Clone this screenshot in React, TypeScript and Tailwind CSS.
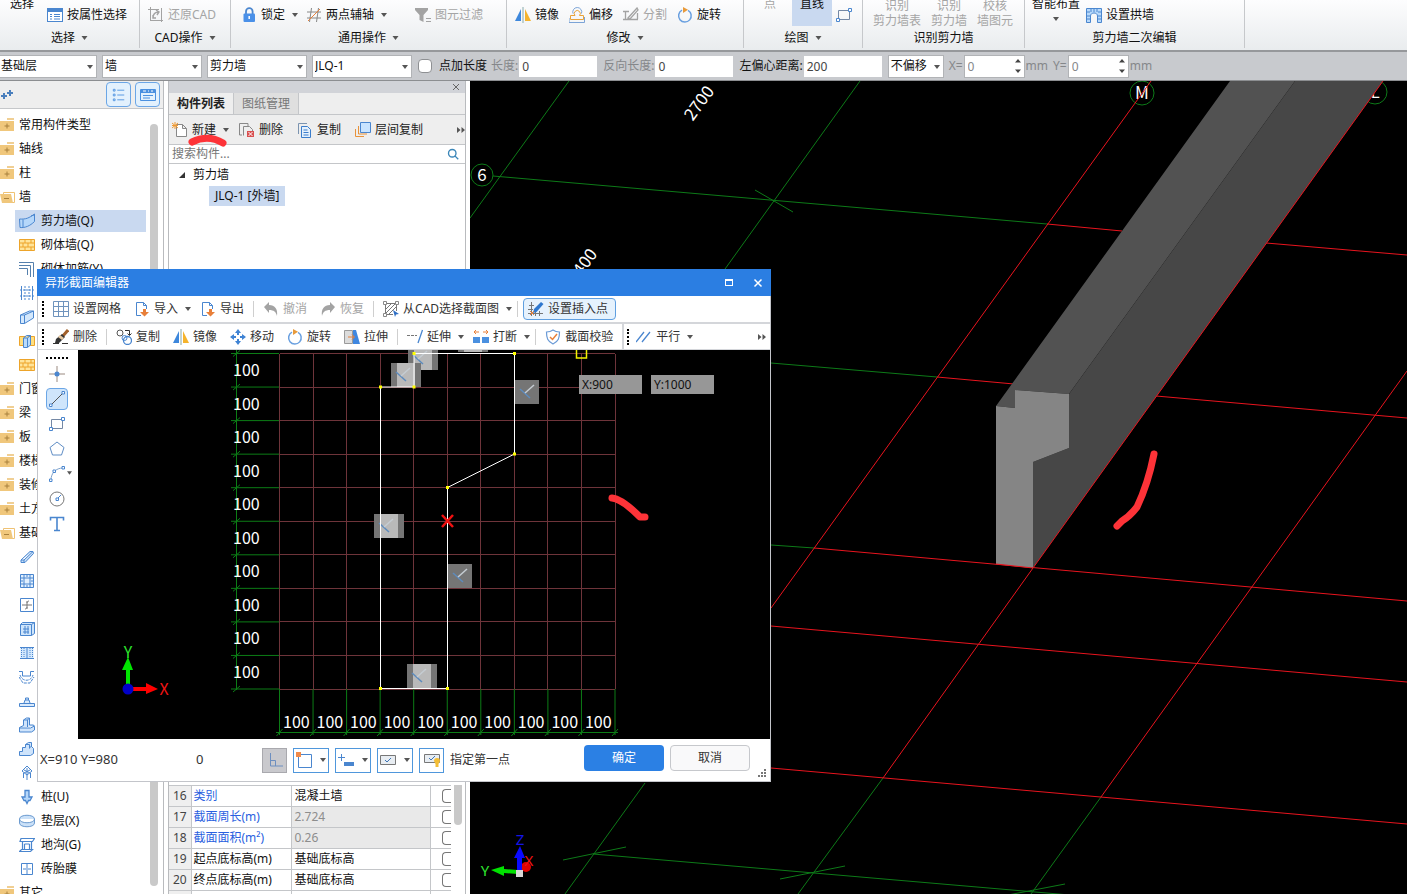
import type { ReactNode } from "react";

const BLUE = "#4a86cf";
const ORANGE = "#e8803a";
const GREY = "#a3a3a3";

const icons: Record<string, ReactNode> = {
  props: (
    <g>
      <rect x="0.5" y="1.5" width="15" height="13" fill="#fff" stroke={BLUE} />
      <path d="M1 2h14v3H1z" fill={BLUE} />
      <path d="M3 7.500h2M3 9.500h2M3 12h2M7 7.500h6M7 9.500h6M7 12h6" stroke={BLUE} />
    </g>
  ),
  restore: (
    <g stroke={GREY}>
      <path d="M2.500 0v14M0 2.500h11M2 13.500h13M13.500 1v14" />
      <path d="M5 11c0-4 2-6 6-6M8 3l3 2-2 3M5 8v3h3" strokeWidth="1.400" />
    </g>
  ),
  lock: (
    <g>
      <path d="M5 8V4.500a3.300 3.300 0 0 1 6.600 0V8" stroke={BLUE} strokeWidth="1.800" />
      <rect x="2.500" y="6.500" width="11.500" height="8.500" rx="1" fill="#4a90e8" />
      <path d="M8.200 9v3" stroke="#fff" strokeWidth="1.500" />
    </g>
  ),
  axis: (
    <g>
      <path d="M5.500 1L3.500 15M12.500 1l-2 14M1 5h14M1 11h14" stroke="#888" />
      <path d="M2 14L14 2" stroke={ORANGE} />
    </g>
  ),
  filter: (
    <g>
      <path d="M0 1h13v2L8.500 8v7l-4-2V8L0 3z" fill={GREY} />
      <path d="M11 11.500h5M11 14.500h5" stroke={GREY} />
    </g>
  ),
  mirror: (
    <g>
      <path d="M6 2v12H0z" fill="#3d87dc" />
      <path d="M10 2v12h6z" fill="#f5b32c" />
      <path d="M8 0v16" stroke="#8aa" />
    </g>
  ),
  offset: (
    <g>
      <path d="M6 8.500a3 3 0 1 1 4.500 0h4v4h-13v-4z" stroke="#e8a33a" />
      <path d="M4 6.500a4.500 4.500 0 1 1 8.500 0M0 11v4.500h15.500V10" stroke="#7ba3d6" />
    </g>
  ),
  split: (
    <g stroke={GREY} strokeWidth="1.300">
      <path d="M0 4.500h6M2.500 4.500v8H15M14.500 12V6M5 11L14 1l1 2-8 9zM0 12.500h2" />
    </g>
  ),
  rotate: (
    <g>
      <path d="M11 3.300A6.300 6.300 0 1 1 5 3.200" stroke="#6aa0e0" strokeWidth="1.500" />
      <path d="M6 0l5 2.800L6 6z" fill="#e89a3a" />
    </g>
  ),
  rect: (
    <g>
      <path d="M2.500 3.500h11v9h-11z" stroke="#7488a5" />
      <path d="M12.500 1.500h3v3h-3zM.5 11.500h3v3h-3z" fill="#fff" stroke={BLUE} />
    </g>
  ),
  arch: (
    <g>
      <path d="M.5 15.500V1.500h15v14h-4V9c0-4-7-4-7 0v6.500z" fill="#b7d9fb" stroke={BLUE} />
      <path d="M1 5h3M1 9h3M1 12h3M12 5h3M12 9h3M12 12h3M5 1v4M8 1v4M11 1v4" stroke={BLUE} />
    </g>
  ),
  list: (
    <g stroke="#4a90e0">
      <path d="M1.500 1.500h2v2h-2zM1.500 7h2v2h-2zM1.500 12.500h2v2h-2zM6 2.500h8M6 8h8M6 13.500h8" />
    </g>
  ),
  card: (
    <g>
      <path d="M.5 2.500h15v11H.5z" stroke="#4a90e0" />
      <path d="M1 2h14v4H1z" fill="#4a90e0" />
      <path d="M3 4h3M8 4h1M11 4h2" stroke="#fff" />
      <path d="M3 8.500h10M3 11h7" stroke="#4a90e0" />
    </g>
  ),
  folder: (
    <g>
      <path d="M7 1h7v2H7z" fill="#f0cf94" />
      <path d="M0 4h14v10H0z" fill="#f0c77c" />
      <path d="M7 6.500v5M4.500 9h5" stroke="#a8803c" />
    </g>
  ),
  folderOpen: (
    <g>
      <path d="M3.500 3.500h11v10h-11z" fill="#fff" stroke="#efc274" />
      <path d="M0 5h11l2 9H2z" fill="#f0c77c" />
      <path d="M4 9.500h5" stroke="#a8803c" />
    </g>
  ),
  wall: (
    <path
      d="M.5 6C7 6.500 10 5 15.500 1v7.500C11 13 6 15 1 14.500zM4 6.500v8M12 3l3-1"
      fill="#b5d7fa"
      stroke={BLUE}
    />
  ),
  brick: (
    <g stroke="#eda42a">
      <path d="M.5 2.500h15v11H.5z" fill="#ffe49a" />
      <path d="M1 6h14M1 10h14M6 2.500V6M12 2.500V6M4 6v4M9 6v4M6 10v4M12 10v4" />
    </g>
  ),
  rebar: <path d="M0 1.500h14.500V16M0 4.500h11.500V16M0 7.500h8.500V14" stroke="#5580ad" />,
  bars: (
    <g stroke={BLUE}>
      <path d="M2.500 1v14M13.500 1v14" />
      <path d="M6 1v14M10 1v14M1 5h14M1 11h14" strokeDasharray="2 1" />
    </g>
  ),
  block: <path d="M1.500 6l9-4h4v7l-9 5.500h-4zM1.500 6h4v8.500M5.500 6l9-4" fill="#d4e8fc" stroke={BLUE} />,
  window: (
    <g>
      <path d="M.5 3.500h15v9H.5z" fill="#ffdf80" stroke="#eda42a" />
      <path d="M4.500 5l3-2.500h4V12l-3 2.500h-4zM8.500 5v9M4.500 5h4l3-2.500" fill="#b9dbfb" stroke={BLUE} />
    </g>
  ),
  beam: <path d="M2 11l9-8.500h3l.500 2L6 13.500H2zM2 11h3l9-8.500M5 11v2.500" fill="#c9e1fa" stroke={BLUE} />,
  raft: (
    <path
      d="M1.500 1.500h13v13h-13zM5 5h6v6H5zM5 1v4M11 1v4M5 11v4M11 11v4M1 5h4M1 11h4M11 5h4M11 11h4M8 1v3M8 12v3M1 8h3M12 8h3"
      fill="#e2f0fe"
      stroke={BLUE}
    />
  ),
  pit: (
    <g>
      <path d="M1.500 1.500h13v13h-13z" stroke={BLUE} />
      <path d="M8 4v8M3 8h10M10 4c-1 0-2 1-2 2M6 12c1 0 2-1 2-2" stroke="#777" />
    </g>
  ),
  plate: (
    <path
      d="M1.500 3.500h11v11h-11zM1.500 3.500l2-2h12v11l-3 2M12.500 3.500l3-2M4 8h6M4 11h6M6 5v8M9 5v8"
      fill="#cfe5fb"
      stroke={BLUE}
    />
  ),
  strip: (
    <g stroke={BLUE}>
      <path d="M1.500 2.500h13v11h-13z" fill="#d3e8fd" stroke="none" />
      <path d="M1 2.500h14M1 13.500h14M8 2.500v11" />
      <path d="M2.500 3v10M5 3v10M11 3v10M13.500 3v10" strokeDasharray="1 1" />
    </g>
  ),
  basin: (
    <g stroke={BLUE}>
      <path d="M0 2.500h3.500V7h8V2.500H15" />
      <path d="M1 6c2 7 11 7 13 0M0 8l4 6h7l4-6" strokeDasharray="3 1" />
    </g>
  ),
  footing: <path d="M.5 10.500h15v3H.5zM5 10l1-3h4l1 3M6.500 7V5h3v2" fill="#d9eafc" stroke={BLUE} />,
  pedestal: (
    <path
      d="M.5 10.500l4-2V3l3-2h3v7h4l1 2v3l-3 2h-12zM4.500 3h4v7M8.500 3l2-2M.5 11h11l4-2"
      fill="#cfe4fb"
      stroke={BLUE}
    />
  ),
  step: (
    <path
      d="M.5 14.500v-4h3v-4h3v-3l3-2h3v4l2 2v5l-3 2zM6.500 3.500h4v4M10 7l3-2"
      fill="#cfe4fb"
      stroke={BLUE}
    />
  ),
  cap: <path d="M3 6l5-5 5 5-5 4zM4.500 8v5M8 3v12M11.500 8v5M5 5l6 3M11 5L5 8" stroke={BLUE} />,
  pile: (
    <path
      d="M6 1.500h4V8h3l-2 3.500H9.500L8 14.500l-1.500-3H5L3 8h3z"
      fill="#b5d7fa"
      stroke={BLUE}
      strokeWidth="1.300"
    />
  ),
  cushion: (
    <path d="M.5 6c0-5 15-5 15 0v4c0 5-15 5-15 0zM.5 6c0 5 15 5 15 0" fill="#cbe1f8" stroke="#6c9bd0" />
  ),
  trench: (
    <path
      d="M2 1.500h13.500l-2 3H1zM3.500 5v8M5.500 7v6M10.500 7v6M12.500 5v8M5.500 7h5M.5 14.500l2-2h11l-2 2z"
      stroke={BLUE}
      strokeWidth="1.200"
    />
  ),
  mold: <path d="M2.500 2.500h11v11h-11zM8 2.500v11M4 8h3M9 8h3" stroke={BLUE} />,
  newDoc: (
    <g>
      <path d="M4.500 2.500h6l4 4v8h-10zM10.500 2.500v4h4" fill="#fff" stroke="#888" />
      <path d="M0 1l6 5M6 1L0 6M3 0v7M0 3.500h6" stroke="#f09a32" />
    </g>
  ),
  delDoc: (
    <g>
      <path d="M3 13H.5V1.500H9V4M4.500 13.500v-9h6l3 3V9" stroke="#888" />
      <path d="M8 9h7v6H8z" fill="#d95050" />
      <path d="M9.500 10l4 4M13.500 10l-4 4" stroke="#fff" />
    </g>
  ),
  copyDoc: (
    <g stroke="#3b7dcb">
      <path d="M1.500 12V1.500H10" stroke="#7c94b0" />
      <path d="M4.500 4.500h6l3 3v8h-9z" fill="#e5f1fd" />
      <path d="M6.500 8h4M6.500 10.500h5M6.500 13h5" />
    </g>
  ),
  layers: (
    <g>
      <path d="M.5 7v7.500H9M3.500 4v8H12" stroke="#e8923a" />
      <path d="M5.500 .500h10v10h-10z" fill="#c9e4ff" stroke={BLUE} />
    </g>
  ),
  search: (
    <path
      d="M10.500 10.500l4.500 4.500M12 7a5 5 0 1 1-10 0 5 5 0 0 1 10 0z"
      stroke="#3b86b8"
      strokeWidth="1.800"
    />
  ),
  grid: <path d="M.5.5h15v15H.5zM5.500 0v16M10.500 0v16M0 5.500h16M0 10.500h16" stroke="#6f93bd" />,
  importDoc: (
    <g>
      <path d="M7 14.500H2.500v-13h7l3 3V8M9.500 1.500v3h3" stroke={BLUE} />
      <path d="M9 8h3v3h3l-4.500 4.500L6 11h3z" fill={ORANGE} />
    </g>
  ),
  undo: <path d="M1 6l5-5v3c6 0 9 4 8 11-1-4-3-6-8-6v3z" fill={GREY} />,
  redo: <path d="M15 6l-5-5v3C4 4 1 8 2 15c1-4 3-6 8-6v3z" fill={GREY} />,
  pick: (
    <g>
      <path d="M2 2.500h12M2.500 2v12M13.500 2v8M2 13.500h8M3 8l5-5M3 12l9-9M6 13l7-7" stroke="#777" />
      <path d="M.5.500h3v3h-3zM12.500.500h3v3h-3zM.5 12.500h3v3h-3z" fill="#fff" stroke="#888" />
      <path d="M10 9l6 4-3 .500-1 2.500z" fill="#2f6fc4" />
    </g>
  ),
  insert: (
    <g>
      <path d="M3.500 1v14M1 4.500h5M0 12.500h15M7.500 8v7M11.500 10v5M0 8.500h5" stroke="#777" />
      <path d="M6 8l7-7 2.500 2-7 8-3.500 1z" fill="#2f78cf" />
      <path d="M2 10l4 4M6 10l-4 4" stroke={ORANGE} />
    </g>
  ),
  brush: (
    <g>
      <path d="M15 1L9 8" stroke="#a2602a" strokeWidth="3" />
      <path d="M9 5l3 3-6 6H2l1-4z" fill="#333" />
      <path d="M7 6l4 3-2 2-4-3z" fill="#e6c8a0" />
      <path d="M0 14.500h6M9 14.500h6" stroke="#333" />
    </g>
  ),
  duplicate: (
    <g>
      <circle cx="4" cy="4" r="3" stroke="#555" />
      <circle cx="11.500" cy="11.500" r="4" stroke={BLUE} strokeWidth="1.300" />
      <circle cx="8.500" cy="9" r="2.500" stroke={BLUE} />
      <path d="M9 1.500h4.500V6M11.500 4.500l2 2 2-2" stroke="#333" />
    </g>
  ),
  move: (
    <g>
      <path d="M8 0l3 4H5zM8 16l3-4H5zM0 8l4-3v6zM16 8l-4-3v6z" fill="#3f83d4" />
      <path d="M8 3v3M8 10v3M3 8h3M10 8h3" stroke="#3f83d4" strokeWidth="2" />
    </g>
  ),
  stretch: (
    <g>
      <path d="M.5 1.500h8v13h-8z" fill="#dcdcdc" stroke="#9a9a9a" />
      <path d="M9 1h3l4 14H9z" fill="#3f87e0" />
      <path d="M4 8h6M8 5.500L10.500 8 8 10.500" stroke={ORANGE} />
    </g>
  ),
  extend: (
    <g>
      <path d="M0 6.500h10" stroke="#777" strokeDasharray="3 1" />
      <path d="M15.500 1L11 14" stroke={BLUE} strokeWidth="1.300" />
    </g>
  ),
  breakLine: (
    <g>
      <path d="M0 8h7v6H0zM9 8h7v6H9z" fill="#4a90e0" />
      <path d="M1 3h5M3 1L1 3l2 2M10 3h5M13 1l2 2-2 2" stroke={ORANGE} />
    </g>
  ),
  shield: (
    <g>
      <path
        d="M8 1c2 1.500 4 2 6.500 2 0 6-1 9.500-6.500 12C2.500 12.500 1.500 9 1.500 3 4 3 6 2.500 8 1z"
        stroke="#6a9ad6"
        strokeWidth="1.200"
      />
      <path d="M5 8l2.500 2.500L12 5" stroke={ORANGE} strokeWidth="1.500" />
    </g>
  ),
  parallel: <path d="M0 13l8-10M6 13l8-10" stroke={BLUE} strokeWidth="1.300" />,
  point: (
    <g>
      <path d="M8 0v16M0 8h16" stroke="#9a8a80" />
      <circle cx="8" cy="8" r="2.500" fill={BLUE} />
    </g>
  ),
  line: (
    <g stroke={BLUE}>
      <path d="M2 14L14 2" stroke="#555" />
      <path d="M.5 13h2.500v2.500H.5zM13 .500h2.500V3H13z" fill="#fff" />
    </g>
  ),
  polygon: <path d="M8 1l7 5.500L12.500 14h-9L1 6.500z" stroke="#5f8dc5" />,
  arc: (
    <g stroke={BLUE}>
      <path d="M2 14C2 7 7 2 14 2" stroke="#7fa3cc" />
      <path d="M.5 13h2.500v2.500H.5zM4 4h2.500v2.500H4zM13 .500h2.500V3H13z" fill="#fff" />
    </g>
  ),
  circle: (
    <g>
      <circle cx="8" cy="8" r="7" stroke="#777" />
      <path d="M7 7h2.500v2.500H7zM9 7l3-3" stroke={BLUE} />
    </g>
  ),
  letter: <path d="M1.500 4.500V1.500h13v3M8 1.500V14M5 14.500h6" stroke={BLUE} strokeWidth="1.600" />,
  ortho: <path d="M3.500 1v13H16M3.500 8.500h5V14" stroke="#6d8fc0" />,
  snapBox: (
    <g>
      <path d="M2.500 2.500h13v13h-13z" stroke={BLUE} />
      <path d="M0 0h5v5H0z" fill="#f08a4a" />
    </g>
  ),
  snapAdd: (
    <g>
      <path d="M0 5.500h7M3.500 2v7" stroke={BLUE} />
      <path d="M6 10h10v4H6z" fill={BLUE} />
    </g>
  ),
  tickBox: (
    <g>
      <path d="M.5 3.500h15v9H.5z" fill="#e8edf2" stroke="#777" />
      <path d="M5 8l2 2 4-4" stroke="#3f75b5" />
    </g>
  ),
  tickBulb: (
    <g>
      <path d="M.5 2.500h15v8H.5z" fill="#e8edf2" stroke="#777" />
      <path d="M5 6l2 2 4-4" stroke="#3f75b5" />
      <path d="M10 9a3 3 0 1 1 6 0l-1.500 3v3h-3v-3z" fill="#f3bd35" />
    </g>
  ),
};

function Icon({ name, className = "size-4" }: { name: string; className?: string }) {
  return (
    <svg viewBox="0 0 16 16" className={`shrink-0 ${className}`} fill="none" aria-hidden="true">
      {icons[name]}
    </svg>
  );
}

function Caret({ className = "h-1 w-1.5" }: { className?: string }) {
  return (
    <svg viewBox="0 0 6 4" className={`shrink-0 ${className}`} aria-hidden="true">
      <path d="M0 0h6L3 4z" fill="#555" />
    </svg>
  );
}

function More() {
  return (
    <button aria-label="更多" className="ml-auto shrink-0">
      <svg viewBox="0 0 8 6" className="h-1.5 w-2" aria-hidden="true">
        <path d="M0 0l3.500 3L0 6zM4.500 0L8 3 4.500 6z" fill="#555" />
      </svg>
    </button>
  );
}

type ToolProps = { icon: string; label: string; caret?: boolean; disabled?: boolean; className?: string };

function Tool({ icon, label, caret, disabled, className = "" }: ToolProps) {
  return (
    <button
      disabled={disabled}
      className={`flex shrink-0 items-center whitespace-nowrap disabled:text-[#a5a5a5] ${className}`}
    >
      <Icon name={icon} />
      <span className="ml-1">{label}</span>
      {caret && (
        <span className="-mr-1 ml-[7px] flex">
          <Caret />
        </span>
      )}
    </button>
  );
}

function Divider() {
  return <span className="-mx-1 h-4 w-px shrink-0 bg-[#cfcfcf]" />;
}

function Grip() {
  return <span className="h-4 w-0 shrink-0 border-l-2 border-dotted border-black" />;
}

type GroupProps = { title: string; caret?: boolean; className: string; children: ReactNode };

function RibbonGroup({ title, caret, className, children }: GroupProps) {
  return (
    <section className={`flex h-12 shrink-0 flex-col justify-end border-r border-[#c6c8cb] ${className}`}>
      <div className="flex shrink-0 items-end">{children}</div>
      <div className="flex h-5 shrink-0 items-center justify-center gap-1.5">
        {title}
        {caret && <Caret className="h-1 w-[7px]" />}
      </div>
    </section>
  );
}

function TallButton({ lines }: { lines: string[] }) {
  return (
    <button disabled className="shrink-0 text-center leading-[15px] text-[#a5a5a5]">
      {lines.map((line) => (
        <span key={line} className="block">
          {line}
        </span>
      ))}
    </button>
  );
}

function Ribbon() {
  return (
    <header className="flex h-[52px] shrink-0 items-start overflow-hidden border-b-2 border-[#96989b] bg-linear-to-b from-[#fdfdfe] to-[#e9ecee]">
      <RibbonGroup title="选择" caret className="w-[140px] px-2.5">
        <button className="mr-[13px] h-8 shrink-0 leading-4">
          <span className="block">选择</span>
          <span className="block h-4" />
        </button>
        <Tool icon="props" label="按属性选择" className="h-[26px]" />
      </RibbonGroup>
      <RibbonGroup title="CAD操作" caret className="w-[91px] px-2">
        <Tool icon="restore" label="还原CAD" disabled className="h-[26px]" />
      </RibbonGroup>
      <RibbonGroup title="通用操作" caret className="w-[276px] px-2.5">
        <Tool icon="lock" label="锁定" caret className="mr-3 h-[26px]" />
        <Tool icon="axis" label="两点辅轴" caret className="mr-8 h-[26px]" />
        <Tool icon="filter" label="图元过滤" disabled className="h-[26px]" />
      </RibbonGroup>
      <RibbonGroup title="修改" caret className="w-[237px] px-2">
        <div className="flex gap-2.5">
          <Tool icon="mirror" label="镜像" className="h-[26px]" />
          <Tool icon="offset" label="偏移" className="h-[26px]" />
          <Tool icon="split" label="分割" disabled className="h-[26px]" />
          <Tool icon="rotate" label="旋转" className="h-[26px]" />
        </div>
      </RibbonGroup>
      <RibbonGroup title="绘图" caret className="w-[119px]">
        <button disabled className="ml-5 h-8 shrink-0 leading-4 text-[#a5a5a5]">
          <span className="block">点</span>
          <span className="block h-4" />
        </button>
        <button className="mb-0.5 ml-4 h-[30px] w-10 shrink-0 bg-[#c9d9f0] leading-4">
          <span className="block">直线</span>
          <span className="block h-3.5" />
        </button>
        <button aria-label="矩形" className="ml-1 flex h-[26px] items-center">
          <Icon name="rect" />
        </button>
      </RibbonGroup>
      <RibbonGroup title="识别剪力墙" className="w-[162px] px-2.5">
        <div className="flex gap-2.5">
          <TallButton lines={["识别", "剪力墙表"]} />
          <TallButton lines={["识别", "剪力墙"]} />
          <TallButton lines={["校核", "墙图元"]} />
        </div>
      </RibbonGroup>
      <RibbonGroup title="剪力墙二次编辑" className="w-[220px] px-[7px]">
        <button className="mr-1.5 flex h-8 shrink-0 flex-col items-center leading-4">
          智能布置
          <span className="flex h-3.5 items-center">
            <Caret />
          </span>
        </button>
        <Tool icon="arch" label="设置拱墙" className="h-[26px]" />
      </RibbonGroup>
    </header>
  );
}

function Picker({ label, value, className }: { label: string; value: string; className: string }) {
  return (
    <div className={`relative shrink-0 ${className}`}>
      <select
        aria-label={label}
        defaultValue={value}
        className="h-[23px] w-full appearance-none border border-[#b1b3b6] bg-white px-0.5 outline-none"
      >
        <option>{value}</option>
      </select>
      <span className="pointer-events-none absolute top-2.5 right-1">
        <Caret />
      </span>
    </div>
  );
}

type FieldProps = { label: string; value: string; muted?: boolean; className?: string };

function Field({ label, value, muted, className = "" }: FieldProps) {
  return (
    <label className={`flex shrink-0 items-center gap-px ${muted ? "text-[#85878a]" : ""} ${className}`}>
      {label}
      <input defaultValue={value} className="h-[21px] w-[78px] bg-white px-[3px] text-[#444] outline-none" />
    </label>
  );
}

function Spinner({ label }: { label: string }) {
  return (
    <label className="ml-[5px] flex shrink-0 items-center text-[#85878a]">
      {label}
      <span className="relative mx-px">
        <input
          defaultValue="0"
          className="h-[23px] w-[61px] border border-[#b1b3b6] bg-white px-[3px] outline-none"
        />
        <svg viewBox="0 0 6 14" className="absolute top-1 right-1 h-3.5 w-1.5" aria-hidden="true">
          <path d="M3 0l3 3.500H0zM3 14l3-3.500H0z" fill="#444" />
        </svg>
      </span>
      mm
    </label>
  );
}

function OptionsBar() {
  return (
    <div className="flex h-[29px] shrink-0 items-center overflow-hidden border-b border-[#8c8e91] bg-[#c8cace]">
      <Picker label="楼层" value="基础层" className="-ml-0.5 w-[99px]" />
      <Picker label="类型" value="墙" className="ml-[5px] w-[100px]" />
      <Picker label="构件类型" value="剪力墙" className="ml-[5px] w-[100px]" />
      <Picker label="构件" value="JLQ-1" className="ml-[5px] w-[100px]" />
      <label className="ml-1.5 flex shrink-0 items-center gap-[7px]">
        <input type="checkbox" className="size-3.5 appearance-none rounded-sm border border-[#8e9093] bg-white" />
        点加长度
      </label>
      <Field label="长度:" value="0" muted className="ml-1" />
      <Field label="反向长度:" value="0" muted className="ml-1.5" />
      <Field label="左偏心距离:" value="200" className="ml-1.5" />
      <Picker label="偏移方式" value="不偏移" className="ml-1.5 w-14" />
      <Spinner label="X=" />
      <Spinner label="Y=" />
    </div>
  );
}

type NavItem = { icon: string; label?: string; child?: boolean; active?: boolean };

const navItems: NavItem[] = [
  { icon: "folder", label: "常用构件类型" },
  { icon: "folder", label: "轴线" },
  { icon: "folder", label: "柱" },
  { icon: "folderOpen", label: "墙" },
  { icon: "wall", label: "剪力墙(Q)", child: true, active: true },
  { icon: "brick", label: "砌体墙(Q)", child: true },
  { icon: "rebar", label: "砌体加筋(Y)", child: true },
  { icon: "bars", child: true },
  { icon: "block", child: true },
  { icon: "window", child: true },
  { icon: "brick", child: true },
  { icon: "folder", label: "门窗" },
  { icon: "folder", label: "梁" },
  { icon: "folder", label: "板" },
  { icon: "folder", label: "楼梯" },
  { icon: "folder", label: "装修" },
  { icon: "folder", label: "土方" },
  { icon: "folderOpen", label: "基础" },
  { icon: "beam", child: true },
  { icon: "raft", child: true },
  { icon: "pit", child: true },
  { icon: "plate", child: true },
  { icon: "strip", child: true },
  { icon: "basin", child: true },
  { icon: "footing", child: true },
  { icon: "pedestal", child: true },
  { icon: "step", child: true },
  { icon: "cap", child: true },
  { icon: "pile", label: "桩(U)", child: true },
  { icon: "cushion", label: "垫层(X)", child: true },
  { icon: "trench", label: "地沟(G)", child: true },
  { icon: "mold", label: "砖胎膜", child: true },
  { icon: "folder", label: "其它" },
];

function Sidebar() {
  return (
    <aside className="flex w-[164px] shrink-0 flex-col overflow-hidden border-r border-[#b9bbbe] bg-white">
      <div className="flex h-7 shrink-0 items-center gap-1 border-b border-[#c5c7ca] bg-[#eeeeee] pr-[3px]">
        <svg viewBox="0 0 14 12" className="mr-auto h-3 w-3.5" aria-hidden="true">
          <path d="M4 4v6M1 7h6M10 1v6M7 4h6" stroke="#4a7fbd" strokeWidth="2" />
        </svg>
        <button
          aria-label="列表"
          className="flex size-[25px] items-center justify-center rounded-sm border border-[#6ba6e6] bg-[#e3f1fd]"
        >
          <Icon name="list" className="size-3.5" />
        </button>
        <button
          aria-label="图标"
          className="flex size-[25px] items-center justify-center rounded-sm border border-[#6ba6e6] bg-[#e3f1fd]"
        >
          <Icon name="card" />
        </button>
      </div>
      <div className="flex min-h-0 flex-1">
        <ul className="min-w-0 flex-1 overflow-hidden pt-1">
          {navItems.map((item, i) => (
            <li key={i} className={`flex h-6 items-center ${item.child ? "pl-[15px]" : ""}`}>
              <button
                aria-label={item.label ?? item.icon}
                className={`flex h-[22px] items-center whitespace-nowrap ${item.child ? "w-[131px] gap-1.5 pl-1" : "gap-[3px]"} ${item.active ? "bg-[#c9d9f0]" : ""}`}
              >
                <Icon name={item.icon} />
                {item.label}
              </button>
            </li>
          ))}
        </ul>
        <div className="mt-[15px] mr-[5px] mb-2 w-2 shrink-0 rounded-full bg-[#c9c9c9]" />
      </div>
    </aside>
  );
}

const properties = [
  { id: 16, name: "类别", value: "混凝土墙", link: true, readOnly: false },
  { id: 17, name: "截面周长(m)", value: "2.724", link: true, readOnly: true },
  { id: 18, name: "截面面积(m²)", value: "0.26", link: true, readOnly: true },
  { id: 19, name: "起点底标高(m)", value: "基础底标高", link: false, readOnly: false },
  { id: 20, name: "终点底标高(m)", value: "基础底标高", link: false, readOnly: false },
];

function PropertyTable() {
  return (
    <div className="mt-auto flex h-[109px] shrink-0 items-start overflow-hidden">
      <table className="w-[282px] table-fixed border-collapse text-left">
        <colgroup>
          <col className="w-[22px]" />
          <col className="w-[100px]" />
          <col className="w-[139px]" />
          <col />
        </colgroup>
        <tbody>
          {properties.map((row) => (
            <tr key={row.id} className="h-[21px] border-t border-[#c4c6c9]">
              <td className="border-r border-[#c4c6c9] bg-[#efefef] text-center text-[#444]">{row.id}</td>
              <td
                className={`border-r border-[#c4c6c9] pl-0.5 whitespace-nowrap ${row.link ? "text-[#2a5fe0]" : ""}`}
              >
                {row.name}
              </td>
              <td
                className={`border-r border-[#c4c6c9] pl-[3px] ${row.readOnly ? "bg-[#e9e9e9] text-[#8d8d8d]" : ""}`}
              >
                {row.value}
              </td>
              <td className="overflow-hidden pl-[11px]">
                <input
                  type="checkbox"
                  aria-label={row.name}
                  className="block h-3.5 w-[9px] appearance-none rounded-l-sm border border-r-0 border-[#777] bg-white"
                />
              </td>
            </tr>
          ))}
          <tr className="h-[21px] border-t border-[#c4c6c9]">
            <td className="border-r border-[#c4c6c9] bg-[#efefef]" />
            <td className="border-r border-[#c4c6c9]" />
            <td className="border-r border-[#c4c6c9]" />
            <td />
          </tr>
        </tbody>
      </table>
      <div className="ml-[3px] h-10 w-2 rounded-b-full bg-[#c9c9c9]" />
    </div>
  );
}

function ComponentPanel() {
  return (
    <aside className="relative mx-1 flex w-[298px] shrink-0 flex-col border-x border-[#b9bbbe] bg-white">
      <div className="flex h-3 shrink-0 items-center justify-end bg-[#d1d3d8] pr-1.5">
        <button aria-label="关闭">
          <svg viewBox="0 0 6 6" className="size-1.5" aria-hidden="true">
            <path d="M0 0l6 6M6 0L0 6" stroke="#666" />
          </svg>
        </button>
      </div>
      <div role="tablist" className="flex h-[22px] shrink-0 border-b border-[#c4c6c9] bg-[#eeeeee]">
        <button role="tab" aria-selected="true" className="px-2 font-bold text-[#222]">
          构件列表
        </button>
        <button role="tab" aria-selected="false" className="border-x border-[#c4c6c9] bg-[#dfdfdf] px-2 text-[#777]">
          图纸管理
        </button>
      </div>
      <div className="flex h-[30px] shrink-0 items-center gap-3.5 border-b border-[#c4c6c9] bg-[#eeeeee] pl-[3px] text-[#222]">
        <Tool icon="newDoc" label="新建" caret />
        <Tool icon="delDoc" label="删除" />
        <Tool icon="copyDoc" label="复制" />
        <Tool icon="layers" label="层间复制" />
        <More />
      </div>
      <label className="flex h-[19px] shrink-0 items-center border-b border-[#c4c6c9] pr-1.5">
        <input
          aria-label="搜索构件"
          placeholder="搜索构件..."
          className="min-w-0 flex-1 px-[3px] outline-none placeholder:text-[#777]"
        />
        <Icon name="search" className="size-3" />
      </label>
      <div className="flex h-[22px] shrink-0 items-center gap-2 pl-2.5">
        <svg viewBox="0 0 6 6" className="size-1.5" aria-hidden="true">
          <path d="M6 0v6H0z" fill="#333" />
        </svg>
        剪力墙
      </div>
      <button className="ml-10 flex h-5 shrink-0 items-center self-start bg-[#c9d9f0] px-1.5">JLQ-1 [外墙]</button>
      <PropertyTable />
      <svg viewBox="0 0 44 16" className="absolute top-[50px] left-[18px] h-4 w-11" fill="none" aria-hidden="true">
        <path d="M5 11Q21 3 36 12" stroke="#fd3338" strokeWidth="7" strokeLinecap="round" />
      </svg>
    </aside>
  );
}

function Viewport() {
  return (
    <main className="min-w-0 flex-1 overflow-hidden bg-black">
      <svg
        viewBox="470 81 937 813"
        preserveAspectRatio="xMinYMin slice"
        className="block h-full w-full"
        fill="none"
      >
        <g stroke="#0d7a18">
          <path d="M569 81L470 218M860 81L720 276M493 176L1047 224M755 190L793 212" />
          <path d="M771 363L937 377M771 545L814 548" />
          <path d="M645 783L565 894M883 778L798 894M1101 797L1031 894M593 854L1070 895" />
          <path d="M563 860L626 847M780 879L845 866M1008 895L1065 884" />
          <circle cx="482" cy="175" r="11" />
          <circle cx="1142" cy="93" r="12" />
          <circle cx="1375" cy="92" r="12" />
        </g>
        <g fill="#fff" fontSize="17" className="font-['Noto_Sans_CJK_SC',sans-serif]">
          <text x="482" y="181" textAnchor="middle">6</text>
          <text x="1142" y="99" textAnchor="middle">M</text>
          <text x="1375" y="98" textAnchor="middle">L</text>
          <text transform="translate(699 103) rotate(-54)" y="6" textAnchor="middle">2700</text>
          <text transform="translate(585 262) rotate(-54)" y="6" textAnchor="middle">400</text>
        </g>
        <g stroke="#e8141e">
          <path d="M1151 81L771 608M1033 568L883 778M1407 371L1101 797" />
          <path d="M1047 224L1122 231M1266 243L1407 255M937 377L1014 384M1156 396L1407 418" />
          <path d="M814 548L1407 601M771 626L1407 682M771 768L1407 824" />
        </g>
        <path d="M996 406L1230 81h65L1069 394l-54-4v18z" fill="#525252" />
        <path d="M1069 394L1295 81h88L1033 568V462l36-14z" fill="#474747" />
        <path d="M996 406l19 2v-18l54 4v54l-36 14v106l-37-4z" fill="#858585" />
        <path d="M1383 81L1033 568l-37-4" stroke="#e8141e" />
        <path
          d="M1154 454Q1148 484 1137 507 1130 516 1122 521L1117 526"
          stroke="#fd3338"
          strokeWidth="7"
          strokeLinecap="round"
          strokeLinejoin="round"
        />
        <g fontSize="15">
          <circle cx="526" cy="867" r="5" fill="#e00000" />
          <path d="M517 872v-14h-3l6-12 5 12h-3v14z" fill="#0a0aff" />
          <path d="M518 870l-14-1v-3l-13 4 13 6v-3l14 1z" fill="#00e000" />
          <path d="M516 870h7v7h-7z" fill="#d8d8d8" />
          <text x="520" y="845" textAnchor="middle" fill="#1414e6">Z</text>
          <text x="485" y="876" textAnchor="middle" fill="#2ee62e">Y</text>
          <text x="529" y="866" textAnchor="middle" fill="#f01414">X</text>
        </g>
      </svg>
    </main>
  );
}

const steps = Array.from({ length: 11 }, (_, i) => i);
const cells = steps.slice(0, 10);
const stepSize = 33.55;
const gridX = 279.5;
const gridY = 353.5;

const vertices = [
  [414, 353.5],
  [514.5, 353.5],
  [514.5, 454],
  [447.5, 487.5],
  [447.5, 688.5],
  [380.5, 688.5],
  [380.5, 387],
  [414, 387],
];

function ConstraintMark({ x, y, wide }: { x: number; y: number; wide?: boolean }) {
  return (
    <g transform={`translate(${x} ${y})`}>
      <rect width={wide ? 30 : 24} height="24" fill="#757575" />
      {wide && <rect x="6" width="18" height="24" fill="#b9b9b9" />}
      <path d="M5 9l10 9" stroke="#5d8bbd" strokeWidth="1.500" />
      <path d="M10 13l9-8" stroke="#c5ccd2" strokeWidth="1.500" />
    </g>
  );
}

function SectionCanvas() {
  const end = stepSize * 10;
  return (
    <div className="h-[389px] min-w-0 flex-1 overflow-hidden bg-black">
      <svg
        viewBox="78 350 692 389"
        preserveAspectRatio="xMinYMin slice"
        className="block h-full w-full"
        fill="none"
      >
        <g stroke="#6e343a" shapeRendering="crispEdges">
          {steps.map((i) => (
            <path key={i} d={`M${gridX + i * stepSize} ${gridY}v${end}M${gridX} ${gridY + i * stepSize}h${end}`} />
          ))}
        </g>
        <g stroke="#0c7d16">
          <path d="M236.500 350v340M276 732.500h342" />
          {steps.map((i) => (
            <g key={i}>
              <path d={`M231 ${gridY + i * stepSize}h48M233 ${gridY + i * stepSize + 3}l7-6`} />
              <path d={`M${gridX + i * stepSize} 689v46M${gridX + i * stepSize - 3} 736l6-7`} />
            </g>
          ))}
        </g>
        <g fill="#fff" fontSize="16" className="font-['Noto_Sans_CJK_SC',sans-serif]">
          {cells.map((i) => (
            <g key={i}>
              <text x="233" y={376 + i * stepSize}>100</text>
              <text x={283 + i * stepSize} y="728">100</text>
            </g>
          ))}
        </g>
        <ConstraintMark x={458} y={328} wide />
        <ConstraintMark x={408} y={346} wide />
        <ConstraintMark x={391} y={363} wide />
        <ConstraintMark x={515} y={380} />
        <ConstraintMark x={374} y={514} wide />
        <ConstraintMark x={448} y={564} />
        <ConstraintMark x={407} y={664} wide />
        <polygon points={vertices.map((v) => v.join(",")).join(" ")} stroke="#fff" />
        {vertices.map(([x, y]) => (
          <rect key={`${x}-${y}`} x={x - 1.5} y={y - 1.5} width="3" height="3" fill="#ffff00" />
        ))}
        <path d="M442 515l11 12M453 515l-11 12" stroke="#f01010" strokeWidth="2.500" />
        <path d="M576.500 345v13h10v-13" stroke="#f2f200" strokeWidth="1.500" />
        <path d="M579 375h63v19h-63zM651 375h63v19h-63z" fill="#979797" />
        <g fill="#111" fontSize="12">
          <text x="582" y="389">X:900</text>
          <text x="654" y="389">Y:1000</text>
        </g>
        <path
          d="M612 498Q622 499 640 517L645 517"
          stroke="#fd3338"
          strokeWidth="7"
          strokeLinecap="round"
          strokeLinejoin="round"
        />
        <path d="M126 688v-18h-4l6-13 5 13h-3v18z" fill="#00e400" />
        <path d="M130 687h16v-4l12 6-12 5v-3h-16z" fill="#f00" />
        <circle cx="128" cy="689" r="5.500" fill="#0000c8" />
        <g fontSize="16" textAnchor="middle" className="font-['Noto_Sans_CJK_SC',sans-serif]">
          <text x="128" y="658" fill="#2ee62e">Y</text>
          <text x="164" y="695" fill="#f01414">X</text>
        </g>
      </svg>
    </div>
  );
}

const drawTools = [
  { icon: "point", label: "点" },
  { icon: "line", label: "直线", active: true },
  { icon: "rect", label: "矩形" },
  { icon: "polygon", label: "多边形" },
  { icon: "arc", label: "弧", caret: true },
  { icon: "circle", label: "圆" },
  { icon: "letter", label: "文字" },
];

const snapTools = [
  { icon: "snapBox", label: "捕捉", caret: true },
  { icon: "snapAdd", label: "动态输入", caret: true },
  { icon: "tickBox", label: "约束", caret: true },
  { icon: "tickBulb", label: "提示", caret: false },
];

function SectionEditor() {
  return (
    <div
      role="dialog"
      aria-label="异形截面编辑器"
      className="absolute top-[269px] left-[37px] z-10 w-[734px] border border-t-0 border-[#c3c5ca] bg-white text-[#333]"
    >
      <div className="-mx-px flex h-[27px] items-center bg-[#2b7ee2] px-2 text-white">
        <h2 className="mr-auto">异形截面编辑器</h2>
        <button aria-label="最大化" className="mr-5">
          <span className="block h-[7px] w-2 border border-t-2 border-white" />
        </button>
        <button aria-label="关闭">
          <svg viewBox="0 0 10 10" className="size-2.5" aria-hidden="true">
            <path d="M1.500 1.500l7 7M8.500 1.500l-7 7" stroke="#fff" strokeWidth="1.500" />
          </svg>
        </button>
      </div>
      <div className="flex h-7 items-center gap-[13px] border-b-2 border-[#d4d6da] pl-1">
        <span className="-mr-1 flex">
          <Grip />
        </span>
        <Tool icon="grid" label="设置网格" />
        <Tool icon="importDoc" label="导入" caret />
        <Tool icon="importDoc" label="导出" />
        <Divider />
        <Tool icon="undo" label="撤消" disabled />
        <Tool icon="redo" label="恢复" disabled />
        <Divider />
        <Tool icon="pick" label="从CAD选择截面图" caret />
        <Divider />
        <Tool
          icon="insert"
          label="设置插入点"
          className="-ml-1 h-[22px] rounded-sm border border-[#5f9fe0] bg-[#e6f2fd] pr-[7px] pl-1"
        />
      </div>
      <div className="flex h-[26px] items-center gap-[13px] border-b border-[#d4d6da] px-1">
        <span className="-mr-1 flex">
          <Grip />
        </span>
        <Tool icon="brush" label="删除" />
        <Divider />
        <Tool icon="duplicate" label="复制" />
        <Tool icon="mirror" label="镜像" />
        <Tool icon="move" label="移动" />
        <Tool icon="rotate" label="旋转" />
        <Tool icon="stretch" label="拉伸" />
        <Divider />
        <Tool icon="extend" label="延伸" caret />
        <Tool icon="breakLine" label="打断" caret />
        <Divider />
        <Tool icon="shield" label="截面校验" />
        <span className="-mx-1 h-full w-0.5 shrink-0 bg-[#d4d6da]" />
        <span className="-mx-1.5 flex">
          <Grip />
        </span>
        <Tool icon="parallel" label="平行" caret />
        <More />
      </div>
      <div className="flex">
        <div className="flex w-10 shrink-0 flex-col items-center pt-[7px] pr-0.5">
          <span className="w-[22px] border-t-2 border-dotted border-black" />
          <div className="mt-0.5 flex flex-col items-center">
            {drawTools.map((tool) => (
              <button
                key={tool.icon}
                aria-label={tool.label}
                className="relative flex h-[25px] w-[30px] items-center justify-center"
              >
                <span
                  className={`flex size-[22px] items-center justify-center rounded-sm ${tool.active ? "border border-[#6ba6e6] bg-[#cfe5fb]" : ""}`}
                >
                  <Icon name={tool.icon} />
                </span>
                {tool.caret && (
                  <span className="absolute top-2.5 right-0">
                    <Caret className="h-1 w-[5px]" />
                  </span>
                )}
              </button>
            ))}
          </div>
        </div>
        <SectionCanvas />
      </div>
      <div className="relative flex h-[42px] items-center pl-0.5">
        <output className="w-[156px] shrink-0 text-[13px]">X=910 Y=980</output>
        <output className="w-[66px] shrink-0 text-[13px]">0</output>
        <div className="flex gap-1.5">
          <button
            aria-label="正交"
            className="flex size-[25px] items-center justify-center border border-[#a9a9ae] bg-[#c9c9cd]"
          >
            <Icon name="ortho" />
          </button>
          {snapTools.map((tool) => (
            <button
              key={tool.icon}
              aria-label={tool.label}
              className={`flex h-[25px] items-center justify-center gap-2 border border-[#4f97dc] bg-white ${tool.caret ? "w-9" : "w-[25px]"}`}
            >
              <Icon name={tool.icon} />
              {tool.caret && <Caret />}
            </button>
          ))}
        </div>
        <span className="ml-1.5">指定第一点</span>
        <div className="mr-5 mb-1 ml-auto flex gap-1.5">
          <button className="h-[26px] w-20 rounded-sm bg-[#2b80e4] text-white">确定</button>
          <button className="h-[26px] w-20 rounded-sm border border-[#c6c8cc] bg-[#f9f9fa]">取消</button>
        </div>
        <svg viewBox="0 0 8 8" className="absolute right-1 bottom-1 size-2" aria-hidden="true">
          <path d="M6 0h2v2H6zM3 3h2v2H3zM6 3h2v2H6zM0 6h2v2H0zM3 6h2v2H3zM6 6h2v2H6z" fill="#777" />
        </svg>
      </div>
    </div>
  );
}

export default function App() {
  return (
    <div className="relative flex h-screen flex-col overflow-hidden bg-white font-['Noto_Sans','Noto_Sans_CJK_SC',sans-serif] text-xs text-[#111]">
      <Ribbon />
      <OptionsBar />
      <div className="flex min-h-0 flex-1">
        <Sidebar />
        <ComponentPanel />
        <Viewport />
      </div>
      <SectionEditor />
    </div>
  );
}
